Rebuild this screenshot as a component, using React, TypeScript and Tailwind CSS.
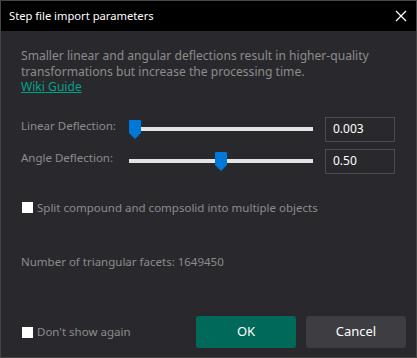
import React from "react";

function Slider({ pos }: { pos: number }) {
  return (
    <div className="relative w-[184px] h-[20px]">
      <div className="absolute left-0 right-0 top-[8px] h-[4px] bg-[#e4e4e4]" />
      <svg
        className="absolute top-[1px]"
        style={{ left: pos }}
        width="12"
        height="19"
        viewBox="0 0 12 19"
      >
        <path d="M0 1 Q0 0 1 0 H11 Q12 0 12 1 V13 L6 19 L0 13 Z" fill="#0078d7" />
      </svg>
    </div>
  );
}

export default function App() {
  return (
    <div
      className="w-[417px] h-[358px] bg-[#29292d] border border-[#454548] flex flex-col text-[11.5px] text-[#8c8c8c]"
      style={{ fontFamily: '"Noto Sans", "Open Sans", sans-serif' }}
    >
      <div className="h-[30px] bg-black flex items-center justify-between pl-[8px] pr-[9px] shrink-0">
        <span className="text-white text-[11.2px]">Step file import parameters</span>
        <svg width="12" height="12" viewBox="0 0 12 12">
          <path d="M1 1 L11 11 M11 1 L1 11" stroke="#ffffff" strokeWidth="1.3" />
        </svg>
      </div>
      <div className="flex-1 flex flex-col px-[20px]">
        <div className="pt-[17px] leading-[15.5px] text-[12.1px]">
          <div>Smaller linear and angular deflections result in higher-quality</div>
          <div>transformations but increase the processing time.</div>
          <div className="text-[#00a38a] underline">Wiki Guide</div>
        </div>
        <div className="mt-[22px] flex items-center">
          <span className="w-[108px] -mt-[6px]">Linear Deflection:</span>
          <Slider pos={0} />
          <div className="ml-[12px] w-[70px] h-[25px] border border-[#4d4d50] flex items-center pl-[7px] text-white text-[12px]">
            0.003
          </div>
        </div>
        <div className="mt-[7px] flex items-center">
          <span className="w-[108px] -mt-[6px]">Angle Deflection:</span>
          <Slider pos={86} />
          <div className="ml-[12px] w-[70px] h-[25px] border border-[#4d4d50] flex items-center pl-[7px] text-white text-[12px]">
            0.50
          </div>
        </div>
        <div className="mt-[25px] flex items-center gap-[4px] pl-[1px]">
          <div className="w-[11px] h-[11px] bg-white" />
          <span>Split compound and compsolid into multiple objects</span>
        </div>
        <div className="mt-[37px]">Number of triangular facets: 1649450</div>
        <div className="mt-auto mb-[9px] flex items-center">
          <div className="flex items-center gap-[4px] pl-[1px]">
            <div className="w-[11px] h-[11px] bg-white" />
            <span>Don't show again</span>
          </div>
          <div className="ml-auto flex gap-[10px] -mr-[10px]">
            <button className="w-[100px] h-[32px] rounded-[3px] bg-[#00695a] text-white text-[13px]">OK</button>
            <button className="w-[100px] h-[32px] rounded-[3px] bg-[#3d3d42] text-white text-[13px]">Cancel</button>
          </div>
        </div>
      </div>
    </div>
  );
}
